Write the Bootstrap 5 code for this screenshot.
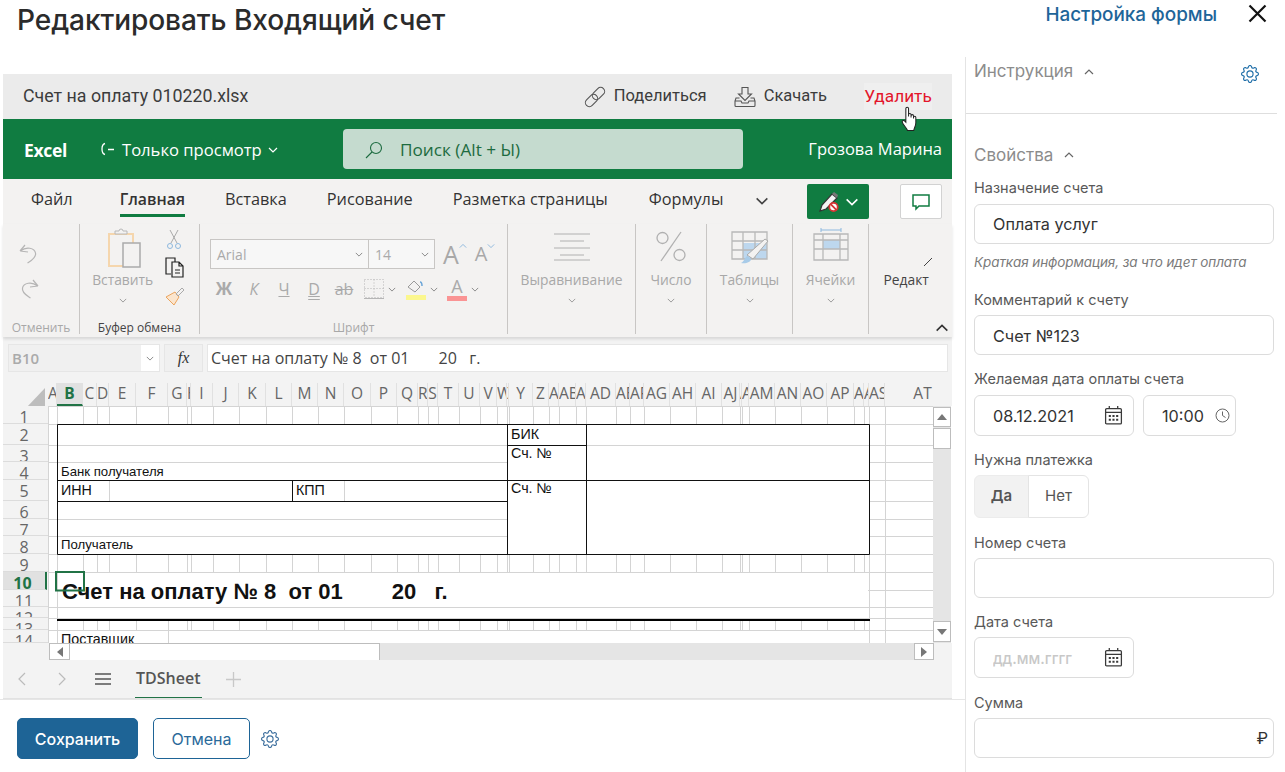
<!DOCTYPE html>
<html lang="ru">
<head>
<meta charset="utf-8">
<title>Редактировать Входящий счет</title>
<link rel="stylesheet" href="https://cdn.jsdelivr.net/npm/bootstrap@5.3.0/dist/css/bootstrap.min.css">
<style>
html,body{height:772px;overflow:hidden;background:#fff}
body{font-family:Inter,"Liberation Sans",sans-serif;color:#333}
.pg-head{height:57px;padding:0 18px 0 17px}
.pg-title{font-size:28.1px;font-weight:500;line-height:40px;margin:0;color:#2b2b2b;letter-spacing:-.1px}
.pg-link{font-size:18.9px;font-weight:500;color:#1e6599;text-decoration:none;line-height:30px}
.pg-x{width:19px;height:19px;margin-left:31px}
.pg-left{width:965px;padding:17px 13px 0 3px}
.pg-right{width:312px;height:715px;border-left:1px solid #e4e4e4;overflow:hidden}
.sec-a{height:57px;border-bottom:1px solid #dedede;padding:4px 18px 0 8px}
.sec-t{font-size:17px;line-height:20px;color:#8c8c8c}
.sec-c{width:10px;height:6px;color:#666;margin-left:11px}
.sec-g{width:18px;height:18px;color:#1f6ea8;margin-top:4px}
.props{padding:31px 3px 0 8px}
.props-h{padding-bottom:9px;margin-bottom:4px}
.fld{margin-bottom:14.5px}
.fld-n{margin-bottom:13.5px}
.fld-c{margin-bottom:13.5px}
.fld-l{display:block;font-size:14.5px;line-height:20px;color:#595959;margin:0 0 5.5px}
.fld-d .fld-l{margin-bottom:6px}
.fld-d{margin-bottom:14px}
.fld-i.form-control{height:40px;border:1px solid #dcdcdc;border-radius:6px;font-size:16.2px;padding:1px 18px 0;color:#333;box-shadow:none}
.fld-i::placeholder{color:#c8c8c8;font-size:15px;font-weight:500}
.fld-h{font-size:13.5px;font-style:italic;line-height:20px;color:#7a7a7a;margin-top:8px;margin-bottom:18px;letter-spacing:-.1px}
.w-date{width:160px}.w-time{width:93px;margin-left:9px}
.w-time .fld-i.form-control{padding-right:0}
.w-date .form-control{height:41px}.w-time .form-control{height:41px}
.fld-ic{position:absolute;right:11px;top:10px;width:19px;height:20px;color:#3a3a3a}
.w-time .fld-ic{width:15px;height:15px;top:13px;color:#666;right:6px}
.rub{position:absolute;right:6px;top:8px;font-size:16.5px;font-weight:400;color:#333;line-height:24px}
.tg .btn{height:43px;font-size:15px;color:#555;border-color:#e4e4e4;padding:0;--bs-btn-hover-bg:transparent;border-radius:6px}
.tg .tg-on{width:55px;background:#f2f2f2;font-weight:600;border-color:#ececec}
.tg .tg-off{width:61px;background:#fff}
.foot{padding-top:18px;padding-left:17px;gap:15px;border-top:1px solid #e6e6e6;margin-left:-3px;margin-right:-13px;width:965px}
.btn.b-save,.btn.b-cancel{height:41px;font-size:16px;font-weight:500;border-radius:5px;padding:0}
.btn.b-save{width:121px;background:#1e6496;border-color:#1e6496;color:#fff}
.btn.b-cancel{width:97px;border:1px solid #1e6496;color:#2a6a9a;background:#fff;font-weight:400}
.foot-g{width:18px;height:18px;color:#3d6f9e;margin-left:-4px}

.xl{width:949px;font-family:"Open Sans","Noto Sans",sans-serif;color:#444}
.xl-file{height:45px;background:#ebebeb;padding-left:20px;font-family:Roboto,"Liberation Sans",sans-serif;font-size:16.5px;color:#3c3c3c}
.xl-file-n{font-size:17.8px}
.xl-act{height:27px;display:flex;align-items:center}
.xl-share{margin-right:27px}
.xl-del{color:#e3152b;background:#efefef;font-size:17.3px;width:68px;height:27px;margin:0 20px 0 37px;justify-content:center;position:relative}
.xl-hand{position:absolute;left:37px;top:23px;width:18px;height:26px}
.xl-green{height:60px;background:#107c41;color:#fff;font-size:16.6px;padding-left:21px}
.xl-brand{font-weight:700;font-size:17.5px;width:74px;letter-spacing:-.3px;padding-top:2px}
.xl-spin{width:24px;height:14px;display:block;flex:none}
.xl-mode{width:221px;padding-top:2px}
.xl-mode-c{margin-left:6px}
.xl-search{width:400px;height:40px;background:#c5dbcf;border-radius:4px;color:#1d6b40;padding-left:21px;padding-top:2px;font-size:17.2px}
.xl-user{margin-left:auto;margin-right:10px;font-size:16.5px;padding-top:1px}
.xl-tabs{height:45px;background:#f3f2f1;font-size:16.3px;color:#333;padding-left:28px;position:relative}
.xl-tab{margin-right:40px;height:45px;line-height:41px;position:relative}
.xl-tab-first{margin-right:47px}
.xl-tab-wide{margin-right:41px}
.xl-tab-last{margin-right:32px}
.xl-tab-on{font-weight:600;font-size:15.8px}
.xl-tab-on::after{content:"";position:absolute;left:0;right:0;bottom:7px;height:3px;background:#107c41}
.xl-more{margin-top:18px;color:#444}
.xl-pill{width:62px;height:35px;background:#107c41;border-radius:2px;margin:5px 31px 0 auto;justify-content:center;gap:5px}
.xl-cm{width:42px;height:35px;background:#fff;border:1px solid #d2d2d2;border-radius:2px;justify-content:center;margin:5px 10px 0 0}
.xl-rib{height:113px;background:#f3f2f1;box-shadow:0 2px 3px rgba(0,0,0,.12);position:relative;z-index:2;padding-bottom:3px;font-size:13.8px;color:#a8a8a8}
.xl-grp{height:110px;border-right:1px solid #c8c6c4;position:relative;display:flex;flex-direction:column;align-items:center}
.xl-grp-b{flex:1 1 auto;width:100%}
.xl-grp-f{font-size:12px;line-height:16px;height:16px;white-space:nowrap;margin-top:auto;flex:none;position:relative;top:2px}
.xl-dark{color:#444}
.g1{width:77px}.g2{width:120px}.g3{width:308px}.g4{width:128px}.g5{width:71px}.g6{width:86px}.g7{width:76px}.g8{width:83px;border-right:0}
.big{display:flex;flex-direction:column;align-items:center;width:100%;padding-top:7px}
.big-ic{height:41px;display:block}
.big-l{line-height:20px;margin-top:-2px;white-space:nowrap;position:relative}
.big-c{width:8px;height:5px;margin-top:8px;color:#999;display:block}
.undo{width:22px;height:22px;color:#b5b5b5;display:block;margin-left:15px}
.undo-1{margin-top:18px}.undo-2{margin-top:13px}
.mini{width:100%;display:flex;flex-direction:column}
.big-clip{width:86px;padding-top:4px}
.big-clip .big-ic{margin-left:4px}
.big-clip .big-l{margin-top:1px}
.mini-clip{width:34px;padding-top:5px}
.mini-2{margin-top:6px}.mini-3{margin-top:7px}
.fnt1{margin:15px 0 0 10px;display:flex;align-items:center}
.fnt-box{height:30px;background:#f7f7f7;border:1px solid #c8c6c4;display:flex;align-items:center;padding:0 5px 0 6px;justify-content:space-between;color:#aaa;font-size:14px}
.fnt-a{width:159px}.fnt-b{width:66px;border-left:0}
.chv{width:8px;height:5px;color:#888;display:block;flex:none}
.fnt2{margin:8px 0 0 10px;display:flex;align-items:center;height:24px;color:#aaa}
.fa-up{font-size:25px;line-height:30px;margin-left:8px}
.fa-dn{font-size:20px;line-height:30px;margin-left:8px}
.fk{width:30px;text-align:center;font-size:16px;line-height:22px;margin-left:-1px;margin-right:1px}
.fk-b{font-weight:700;font-size:18px;font-family:"Liberation Sans",sans-serif}
.fk-i{font-style:italic}
.fk-u{text-decoration:underline}
.fk-d{text-decoration:underline double}
.fk-s{text-decoration:line-through}
.fc-a{width:20px;font-size:18px;line-height:16px}
.fc-bar{height:5px;background:#fa9494;margin-top:2px}
.chv-1{margin-right:10px}.chv-2{margin-right:9px}
.big-cells{padding-top:3px}
.big-cells .big-ic{height:45px}
.big-edit{padding-top:34px}
.big-edit-s{display:block;margin-left:34px}
.big-edit .big-l{margin-top:4px;margin-left:-6px;overflow:hidden;width:48px}
.rib-col{right:3px;bottom:2px}
.xl-fbar{height:46px;background:#f3f3f3;padding:7px 4px 0 5px;gap:4px}
.xl-name{width:152px;height:28px;background:#f0f0f0;border:1px solid #e6e6e6;font-weight:600;color:#aaa;font-size:15px;padding-left:3px;position:relative}
.xl-name-c{position:absolute;right:0;top:0;bottom:0;width:18px;background:#fff;display:flex;align-items:center;justify-content:center}
.xl-fx{width:39px;height:28px;background:#f0f0f0;border:1px solid #e6e6e6;font:italic 16px "Liberation Serif",serif;justify-content:center;color:#333}
.xl-ftxt{flex:1 1 auto;height:28px;background:#fff;border:1px solid #e6e6e6;font-size:16px;padding-left:3px;white-space:pre;color:#444}
.xl-colh{height:23px;background:#f3f3f3;overflow:hidden}
.xl-corner{width:45px;height:23px;flex:none}
.xl-cols{display:grid;grid-template-columns:9px 26px 14px 12px 27px 32px 19px 4px 22px 26px 27px 26px 26px 26px 27px 26px 21px 10px 10px 21px 21px 17px 10px 2px 24px 16px 10px 17px 10px 30px 14px 14px 26px 26px 26px 18px 2px 7px 26px 26px 26px 27px 10px 5px 16px 76px;flex:none}
.xl-cols span{display:flex;justify-content:safe center;overflow:hidden;border-right:1px solid #e1e1e1;font-size:15.5px;line-height:21px;color:#666;height:23px;white-space:nowrap}
.xl-cols .on{background:#e1e1e1;color:#217346;font-weight:700;border-bottom:2px solid #217346}
.xl-sheet{height:237px;background:#fff}
.xl-rows{width:45px;height:237px;background:#f3f3f3;display:grid;grid-template-rows:18px 21px 17px 18px 21px 18px 17px 18px 18px 18px 17px 11px 12px 13px;flex:none}
.xl-rows span{display:block;text-align:center;overflow:hidden;font-size:16px;line-height:22px;color:#666;border-bottom:1px solid #dcdcdc;padding-right:3px}
.xl-rows .on{background:#e1e1e1;color:#217346;font-weight:700;border-right:2px solid #217346;margin-right:1px}
.xl-canvas{display:block;flex:none;font-family:"Liberation Sans",sans-serif}
.xl-vs{width:18px;height:237px;background:#e5e5e5;flex:none;display:flex;flex-direction:column;padding-top:1px}
.sc-b{background:#fff;border:1px solid #bdbdbd;display:flex;align-items:center;justify-content:center;flex:none}
.sc-up{height:20px}.sc-th{height:21px;margin-top:1px}.sc-dn{height:21px;margin-top:auto;margin-bottom:1px}
.xl-hs{height:17px;background:#f3f3f3}
.hs-pad{width:46px;flex:none}.hs-end{width:18px;flex:none}
.hs-l{width:21px;height:17px}.hs-r{width:20px;height:17px}
.hs-th{width:310px;height:17px;border-left:0;border-bottom:0}
.xl-ht{flex:1 1 auto;background:#e5e5e5;height:17px;display:flex}
.xl-sheets{height:39px;background:#f3f3f3;border-bottom:1px solid #e2e2e2;color:#777;padding-left:14px}
.xl-stab{font-size:16px;font-weight:600;color:#555;line-height:37px;height:38px;border-bottom:1px solid #217346;margin:0 0 0 24px;padding:0 1px}
.sh-n{margin-left:30px}.sh-m{margin-left:28px}.sh-p{margin-left:24px}
</style>
</head>
<body>
<svg width="0" height="0" class="position-absolute">
<symbol id="gear" viewBox="0 0 16 16"><path fill="currentColor" d="M8 4.754a3.246 3.246 0 1 0 0 6.492 3.246 3.246 0 0 0 0-6.492zM5.754 8a2.246 2.246 0 1 1 4.492 0 2.246 2.246 0 0 1-4.492 0z"/><path fill="currentColor" d="M9.796 1.343c-.527-1.79-3.065-1.79-3.592 0l-.094.319a.873.873 0 0 1-1.255.52l-.292-.16c-1.64-.892-3.433.902-2.54 2.541l.159.292a.873.873 0 0 1-.52 1.255l-.319.094c-1.79.527-1.79 3.065 0 3.592l.319.094a.873.873 0 0 1 .52 1.255l-.16.292c-.892 1.64.901 3.434 2.541 2.54l.292-.159a.873.873 0 0 1 1.255.52l.094.319c.527 1.79 3.065 1.79 3.592 0l.094-.319a.873.873 0 0 1 1.255-.52l.292.16c1.64.893 3.434-.902 2.54-2.541l-.159-.292a.873.873 0 0 1 .52-1.255l.319-.094c1.79-.527 1.79-3.065 0-3.592l-.319-.094a.873.873 0 0 1-.52-1.255l.16-.292c.893-1.64-.902-3.433-2.541-2.54l-.292.159a.873.873 0 0 1-1.255-.52l-.094-.319zm-2.633.283c.246-.835 1.428-.835 1.674 0l.094.319a1.873 1.873 0 0 0 2.693 1.115l.291-.16c.764-.415 1.6.42 1.184 1.185l-.159.292a1.873 1.873 0 0 0 1.116 2.692l.318.094c.835.246.835 1.428 0 1.674l-.319.094a1.873 1.873 0 0 0-1.115 2.693l.16.291c.415.764-.42 1.6-1.185 1.184l-.291-.159a1.873 1.873 0 0 0-2.693 1.116l-.094.318c-.246.835-1.428.835-1.674 0l-.094-.319a1.873 1.873 0 0 0-2.692-1.115l-.292.16c-.764.415-1.6-.42-1.184-1.185l.159-.291A1.873 1.873 0 0 0 1.945 8.93l-.319-.094c-.835-.246-.835-1.428 0-1.674l.319-.094A1.873 1.873 0 0 0 3.06 4.377l-.16-.292c-.415-.764.42-1.6 1.185-1.184l.292.159a1.873 1.873 0 0 0 2.692-1.115l.094-.319z"/></symbol>
<symbol id="dn" viewBox="0 0 10 6"><path d="M1 1l4 4 4-4" fill="none" stroke="currentColor" stroke-width="1.2"/></symbol>
<symbol id="up" viewBox="0 0 10 6"><path d="M1 5l4-4 4 4" fill="none" stroke="currentColor" stroke-width="1.2"/></symbol>
<symbol id="cal" viewBox="0 0 18 19"><path fill="none" stroke="currentColor" stroke-width="1.2" d="M1.500 4.500a1 1 0 0 1 1-1h13a1 1 0 0 1 1 1v12.500a1 1 0 0 1-1 1h-13a1 1 0 0 1-1-1zM1.500 7h15M5 1v3M13 1v3"/><path fill="currentColor" d="M4.500 9.500h2v2h-2zM8 9.500h2v2H8zM11.500 9.500h2v2h-2zM4.500 13h2v2h-2zM8 13h2v2H8zM11.500 13h2v2h-2z"/></symbol>
</svg>

<header class="pg-head d-flex align-items-start justify-content-between">
  <h1 class="pg-title">Редактировать Входящий счет</h1>
  <div class="d-flex align-items-start">
    <a href="#" class="pg-link">Настройка формы</a>
    <svg class="pg-x mt-1" viewBox="0 0 19 19"><path d="M1.500 1.500l16 16M17.500 1.500l-16 16" stroke="#111" stroke-width="2.200" fill="none"/></svg>
  </div>
</header>

<main class="d-flex">
  <section class="pg-left">
    <div class="xl">
      <div class="xl-file d-flex align-items-center">
        <span class="xl-file-n me-auto">Счет на оплату 010220.xlsx</span>
        <span class="xl-act xl-share"><svg class="me-2" width="22" height="22" viewBox="0 0 22 22" fill="none" stroke="#555" stroke-width="1.100"><rect x="0.500" y="10.500" width="14" height="8" rx="4" transform="rotate(-45 7.500 14.500)"/><rect x="7.500" y="3.500" width="14" height="8" rx="4" transform="rotate(-45 14.500 7.500)"/></svg>Поделиться</span>
        <span class="xl-act"><svg class="me-2" width="22" height="22" viewBox="0 0 22 22" fill="none" stroke="#555" stroke-width="1.100"><path d="M8 1.500h6V8h3.500L11 14.500 4.500 8H8z"/><path d="M5.500 12H2l-1 3v4.500a1 1 0 0 0 1 1h18a1 1 0 0 0 1-1V15l-1-3h-3.500M1 15h6l1 2h6l1-2h6"/></svg>Скачать</span>
        <span class="xl-act xl-del">Удалить
          <svg class="xl-hand" viewBox="0 0 17 25"><path fill="#fff" stroke="#222" stroke-width="1" d="M4.500 2.500a1.300 1.300 0 0 1 2.600 0V10V8.500a1.200 1.200 0 0 1 2.400 0V11V9.500a1.200 1.200 0 0 1 2.400 0V12v-1a1.100 1.100 0 0 1 2.200 0v5c0 3-1.500 5-2 7.500H6C5.500 21 1 17.500 1 15.200c0-1.500 1.500-1.700 2.500-.7l1 1z"/></svg>
        </span>
      </div>

      <div class="xl-green d-flex align-items-center">
        <span class="xl-brand">Excel</span>
        <svg class="xl-spin" viewBox="0 0 24 14" fill="none" stroke="#fff" stroke-width="1.300"><path d="M7 1.500C3 2.500 3 11.500 7 12.500M10 7.500h6"/></svg>
        <span class="xl-mode d-flex align-items-center">Только просмотр<svg class="xl-mode-c" width="10" height="6"><use href="#dn"/></svg></span>
        <div class="xl-search d-flex align-items-center"><svg class="me-3" width="20" height="20" viewBox="0 0 20 20" fill="none" stroke="#1d6b40" stroke-width="1.100"><circle cx="12" cy="8" r="5.500"/><path d="M8 12l-6 6"/></svg>Поиск (Alt + Ы)</div>
        <span class="xl-user">Грозова Марина</span>
      </div>

      <div class="xl-tabs d-flex align-items-start">
        <span class="xl-tab xl-tab-first">Файл</span>
        <span class="xl-tab xl-tab-on">Главная</span>
        <span class="xl-tab">Вставка</span>
        <span class="xl-tab">Рисование</span>
        <span class="xl-tab xl-tab-wide">Разметка страницы</span>
        <span class="xl-tab xl-tab-last">Формулы</span>
        <svg class="xl-more" width="14" height="8" viewBox="0 0 10 6"><use href="#dn"/></svg>
        <div class="xl-pill d-flex align-items-center">
          <svg width="22" height="22" viewBox="0 0 22 22"><path d="M2 20l2-6L14 3l5 4L8 18z" fill="#f4f4f4" stroke="#333" stroke-width="1.200"/><path d="M14 3l2-2 4 3-1 3z" fill="#777"/><circle cx="15.500" cy="16" r="4.200" fill="#fff" stroke="#d63333" stroke-width="1.800"/><path d="M12.700 13.200l5.600 5.600" stroke="#d63333" stroke-width="1.800"/></svg>
          <svg width="14" height="8" viewBox="0 0 10 6" color="#fff"><use href="#dn"/></svg>
        </div>
        <div class="xl-cm d-flex align-items-center"><svg width="18" height="18" viewBox="0 0 18 18" fill="none" stroke="#107c41" stroke-width="1.500"><path d="M1 2h16v11H7l-3 3v-3H1z"/></svg></div>
      </div>

      <div class="xl-rib d-flex">
        <div class="xl-grp g1">
          <div class="xl-grp-b">
            <svg class="undo undo-1" viewBox="0 0 22 22" fill="none" stroke="currentColor" stroke-width="1.200"><path d="M2 9l5-6M2 9l8 1M2.500 9c6-5 14-3 15 2s-5 8-8 10"/></svg>
            <svg class="undo undo-2" viewBox="0 0 22 22" fill="none" stroke="currentColor" stroke-width="1.200"><path d="M20 9l-5-6M20 9l-8 1M19.500 9c-6-5-14-3-15 2s5 8 8 10"/></svg>
          </div>
          <div class="xl-grp-f">Отменить</div>
        </div>
        <div class="xl-grp g2">
          <div class="xl-grp-b d-flex">
            <div class="big big-clip">
              <svg class="big-ic" width="38" height="41" viewBox="0 0 38 41" fill="none"><path d="M3 6h24v32H3z" stroke="#f5d6ad" stroke-width="2"/><path d="M9 6h12V3H17a2 2 0 0 0-4 0H9z" stroke="#b8b8b8" fill="#f3f2f1"/><rect x="17" y="15" width="17" height="24" fill="#f3f2f1" stroke="#aaa" stroke-width="1.500"/></svg>
              <span class="big-l">Вставить</span><svg class="big-c"><use href="#dn"/></svg>
            </div>
            <div class="mini mini-clip">
              <svg width="18" height="22" viewBox="0 0 18 22" fill="none" stroke="#aaa"><path d="M5 1l7 13M13 1L6 14"/><circle cx="5" cy="17" r="2.500" stroke="#8db8de"/><circle cx="13" cy="17" r="2.500" stroke="#8db8de"/></svg>
              <svg class="mini-2" width="20" height="22" viewBox="0 0 20 22" fill="none" stroke="#222" stroke-width="1.200"><path d="M6 17H1V1h9v4"/><path d="M7 5h7l4 4v11H7zM14 5v4h4M10 13h5M10 16h5" fill="#f3f2f1"/></svg>
              <svg class="mini-3" width="20" height="20" viewBox="0 0 20 20" fill="none"><path d="M10 6L1 11l8 8 5-8z" fill="#fbe5cd" stroke="#eba45d"/><path d="M11 8l6-6 2 2-6 6z" stroke="#aaa"/></svg>
            </div>
          </div>
          <div class="xl-grp-f xl-dark">Буфер обмена</div>
        </div>
        <div class="xl-grp g3 align-items-stretch">
          <div class="xl-grp-b">
            <div class="fnt1">
              <div class="fnt-box fnt-a"><span>Arial</span><svg class="chv"><use href="#dn"/></svg></div>
              <div class="fnt-box fnt-b"><span>14</span><svg class="chv"><use href="#dn"/></svg></div>
              <span class="fa-up">A</span><svg width="8" height="6" class="align-self-start mt-1" color="#8db8de"><use href="#up"/></svg>
              <span class="fa-dn">A</span><svg width="8" height="6" class="align-self-start mt-1" color="#8db8de"><use href="#dn"/></svg>
            </div>
            <div class="fnt2">
              <span class="fk fk-b">Ж</span><span class="fk fk-i">К</span><span class="fk fk-u">Ч</span><span class="fk fk-d">D</span><span class="fk fk-s">ab</span>
              <svg class="ms-1" width="20" height="20" viewBox="0 0 20 20" fill="none" stroke="#b5b5b5" stroke-dasharray="1 2"><path d="M.5.500h19v18H.5zM10 .5v18M.5 9.500h19"/><path d="M0 19.500h20" stroke-dasharray="none"/></svg>
              <svg class="chv ms-1 chv-1"><use href="#dn"/></svg>
              <svg width="20" height="22" viewBox="0 0 20 22" fill="none"><path d="M2 9l6-6 6 6-5 5z" stroke="#999"/><path d="M14 4c2 0 2 2 2 4" stroke="#6aa5d8" stroke-width="1.500"/><path d="M0 17h20v5H0z" fill="#fbf78e"/></svg>
              <svg class="chv ms-1 chv-2"><use href="#dn"/></svg>
              <span class="d-inline-flex flex-column align-items-center fc-a">A<i class="d-block w-100 fc-bar"></i></span>
              <svg class="chv ms-1"><use href="#dn"/></svg>
            </div>
          </div>
          <div class="xl-grp-f text-center">Шрифт</div>
        </div>
        <div class="xl-grp g4"><div class="xl-grp-b big">
          <svg class="big-ic" width="36" height="41" viewBox="0 0 36 41" stroke="#b0b0b0"><path d="M0 3h36M6 10h24M0 17h36M6 24h24M0 29h36"/></svg>
          <span class="big-l">Выравнивание</span><svg class="big-c"><use href="#dn"/></svg></div></div>
        <div class="xl-grp g5"><div class="xl-grp-b big">
          <svg class="big-ic" width="32" height="41" viewBox="0 0 32 41" fill="none" stroke="#b0b0b0" stroke-width="1.300"><circle cx="7.500" cy="7" r="5.500"/><circle cx="24.500" cy="24" r="5.500"/><path d="M26 1L6 30"/></svg>
          <span class="big-l">Число</span><svg class="big-c"><use href="#dn"/></svg></div></div>
        <div class="xl-grp g6"><div class="xl-grp-b big">
          <svg class="big-ic" width="38" height="41" viewBox="0 0 38 41" fill="none"><path d="M12 12h24v16H12z" fill="#bdd7ee"/><path d="M1 1h35v27H1zM12 1v27M24 1v27M1 10h35M1 19h35" stroke="#b8b8b8" stroke-width="1.300"/><path d="M16 24L34 8l3 2-15 18z" fill="#f3f2f1" stroke="#aaa"/><path d="M10 32c5 1 10-1 10-4l-3-3c-3 0-3 5-7 7z" fill="#a8cbe8"/></svg>
          <span class="big-l">Таблицы</span><svg class="big-c"><use href="#dn"/></svg></div></div>
        <div class="xl-grp g7"><div class="xl-grp-b big big-cells">
          <svg class="big-ic" width="36" height="45" viewBox="0 0 36 45" fill="none"><path d="M8 3h20M8 1v4M28 1v4" stroke="#8db8de"/><path d="M10 13h17v9H10z" fill="#bdd7ee"/><path d="M1 7h34v26H1zM10 7v26M27 7v26M1 13h34M1 22h34" stroke="#b8b8b8" stroke-width="1.300"/></svg>
          <span class="big-l">Ячейки</span><svg class="big-c"><use href="#dn"/></svg></div></div>
        <div class="xl-grp g8"><div class="xl-grp-b big big-edit position-relative">
          <svg class="big-edit-s" width="8" height="8" viewBox="0 0 8 8"><path d="M0 8l8-8" stroke="#444"/></svg>
          <span class="big-l xl-dark">Редакт</span></div>
          <svg class="position-absolute rib-col" width="14" height="8" viewBox="0 0 10 6" color="#333"><use href="#up"/></svg>
        </div>
      </div>

      <div class="xl-fbar d-flex">
        <div class="xl-name d-flex align-items-center">B10<span class="xl-name-c"><svg class="chv"><use href="#dn"/></svg></span></div>
        <div class="xl-fx d-flex align-items-center">fx</div>
        <div class="xl-ftxt d-flex align-items-center">Счет на оплату № 8  от 01       20   г.</div>
      </div>

      <div class="xl-colh d-flex">
        <div class="xl-corner"><svg width="45" height="23" viewBox="0 0 45 23"><path d="M24 22L42 3v19z" fill="#bdbdbd"/></svg></div>
        <div class="xl-cols"><span>A</span><span class="on">B</span><span>C</span><span>D</span><span>E</span><span>F</span><span>G</span><span>H</span><span>I</span><span>J</span><span>K</span><span>L</span><span>M</span><span>N</span><span>O</span><span>P</span><span>Q</span><span>R</span><span>S</span><span>T</span><span>U</span><span>V</span><span>W</span><span>X</span><span>Y</span><span>Z</span><span>AA</span><span>AB</span><span>AC</span><span>AD</span><span>AE</span><span>AF</span><span>AG</span><span>AH</span><span>AI</span><span>AJ</span><span>AK</span><span>AL</span><span>AM</span><span>AN</span><span>AO</span><span>AP</span><span>AQ</span><span>AR</span><span>AS</span><span>AT</span></div>
      </div>

      <div class="xl-sheet d-flex">
        <div class="xl-rows"><span>1</span><span>2</span><span>3</span><span>4</span><span>5</span><span>6</span><span>7</span><span>8</span><span>9</span><span class="on">10</span><span>11</span><span>12</span><span>13</span><span>14</span></div>
        <svg class="xl-canvas" width="885" height="237" viewBox="48 406 885 237">
          <path fill="none" stroke="#d4d4d4" d="M57.500 406V643M83.500 406V643M97.500 406V643M109.500 406V643M136.500 406V643M168.500 406V643M187.500 406V643M191.500 406V643M213.500 406V643M239.500 406V643M266.500 406V643M292.500 406V643M318.500 406V643M344.500 406V643M371.500 406V643M397.500 406V643M418.500 406V643M428.500 406V643M438.500 406V643M459.500 406V643M480.500 406V643M497.500 406V643M507.500 406V643M509.500 406V643M533.500 406V643M549.500 406V643M559.500 406V643M576.500 406V643M586.500 406V643M616.500 406V643M630.500 406V643M644.500 406V643M670.500 406V643M696.500 406V643M722.500 406V643M740.500 406V643M742.500 406V643M749.500 406V643M775.500 406V643M801.500 406V643M827.500 406V643M854.500 406V643M864.500 406V643M869.500 406V643M885.500 406V643"/>
          <path fill="#fff" d="M58 425h811v129H58zM58 573h811v45H58zM58 631h811v12H58z"/>
          <path fill="none" stroke="#d4d4d4" d="M48 406.500H933M48 424.500H933M48 445.500H933M48 462.500H507M869 462.500H933M869 480.500H933M869 501.500H933M48 519.500H507M869 519.500H933M48 536.500H507M869 536.500H933M48 554.500H933M48 572.500H933M868 590.500H933M48 607.500H933M48 618.500H933M48 630.500H933M109.500 480V501M344.500 480V501M168.500 631V643M48.500 406V643"/>
          <path fill="none" stroke="#111" d="M57.500 424.500H869.500V554.500H57.500ZM507.500 424V554M586.500 424V554M57 480.500H869M57 501.500H507M507 445.500H586M292.500 480V501"/>
          <path d="M57 620H870" stroke="#000" stroke-width="2"/>
          <g fill="#111" font-size="13.200">
            <text x="61" y="476">Банк получателя</text>
            <text x="61" y="549">Получатель</text>
            <g font-size="14.300">
              <text x="61" y="495">ИНН</text>
              <text x="296" y="495">КПП</text>
              <text x="511" y="439">БИК</text>
              <text x="511" y="458">Сч. №</text>
              <text x="511" y="493">Сч. №</text>
              <text x="61" y="644">Поставщик</text>
            </g>
            <text x="62" y="599" font-size="22" font-weight="700" xml:space="preserve" style="white-space:pre">Счет на оплату № 8  от 01        20   г.</text>
          </g>
          <rect x="56" y="572" width="28" height="18.500" fill="none" stroke="#217346" stroke-width="2"/>
        </svg>
        <div class="xl-vs">
          <div class="sc-b sc-up"><svg width="10" height="6" viewBox="0 0 10 6"><path d="M5 0l5 6H0z" fill="#777"/></svg></div>
          <div class="sc-b sc-th"></div>
          <div class="sc-b sc-dn"><svg width="10" height="6" viewBox="0 0 10 6"><path d="M5 6l5-6H0z" fill="#777"/></svg></div>
        </div>
      </div>

      <div class="xl-hs d-flex">
        <div class="hs-pad"></div>
        <div class="sc-b hs-l"><svg width="6" height="10" viewBox="0 0 6 10"><path d="M0 5l6 5V0z" fill="#777"/></svg></div>
        <div class="sc-b hs-th"></div>
        <div class="xl-ht"></div>
        <div class="sc-b hs-r"><svg width="6" height="10" viewBox="0 0 6 10"><path d="M6 5L0 10V0z" fill="#777"/></svg></div>
        <div class="hs-end"></div>
      </div>

      <div class="xl-sheets d-flex align-items-center">
        <svg width="10" height="14" viewBox="0 0 10 14" fill="none" stroke="#bbb" stroke-width="1.200"><path d="M8 1L2 7l6 6"/></svg>
        <svg class="sh-n" width="10" height="14" viewBox="0 0 10 14" fill="none" stroke="#bbb" stroke-width="1.200"><path d="M2 1l6 6-6 6"/></svg>
        <svg class="sh-m" width="16" height="12" viewBox="0 0 16 12" stroke="#555" stroke-width="1.300"><path d="M0 1h16M0 6h16M0 11h16"/></svg>
        <span class="xl-stab">TDSheet</span>
        <svg class="sh-p" width="15" height="15" viewBox="0 0 15 15" stroke="#c8c8c8" stroke-width="1.300"><path d="M7.500 0v15M0 7.500h15"/></svg>
      </div>
    </div>

    <div class="foot d-flex align-items-center">
      <button class="btn b-save">Сохранить</button>
      <button class="btn b-cancel">Отмена</button>
      <svg class="foot-g"><use href="#gear"/></svg>
    </div>
  </section>

  <aside class="pg-right">
    <div class="sec-a d-flex align-items-start">
      <span class="sec-t">Инструкция</span>
      <svg class="sec-c mt-2"><use href="#up"/></svg>
      <svg class="sec-g ms-auto"><use href="#gear"/></svg>
    </div>
    <form class="props">
      <div class="d-flex align-items-center props-h"><span class="sec-t">Свойства</span><svg class="sec-c"><use href="#up"/></svg></div>
      <div class="fld mb-0">
        <label class="fld-l">Назначение счета</label>
        <input class="form-control fld-i" value="Оплата услуг">
        <div class="fld-h">Краткая информация, за что идет оплата</div>
      </div>
      <div class="fld fld-c">
        <label class="fld-l">Комментарий к счету</label>
        <input class="form-control fld-i" value="Счет №123">
      </div>
      <div class="fld fld-d">
        <label class="fld-l">Желаемая дата оплаты счета</label>
        <div class="d-flex">
          <div class="position-relative w-date"><input class="form-control fld-i" value="08.12.2021"><svg class="fld-ic"><use href="#cal"/></svg></div>
          <div class="position-relative w-time"><input class="form-control fld-i" value="10:00"><svg class="fld-ic" viewBox="0 0 15 15" fill="none" stroke="currentColor"><circle cx="7.500" cy="7.500" r="6.500"/><path d="M7.500 3.500v4l3 2"/></svg></div>
        </div>
      </div>
      <div class="fld">
        <label class="fld-l">Нужна платежка</label>
        <div class="btn-group tg"><button type="button" class="btn tg-on">Да</button><button type="button" class="btn tg-off">Нет</button></div>
      </div>
      <div class="fld fld-n">
        <label class="fld-l">Номер счета</label>
        <input class="form-control fld-i">
      </div>
      <div class="fld">
        <label class="fld-l">Дата счета</label>
        <div class="position-relative w-date"><input class="form-control fld-i" placeholder="дд.мм.гггг"><svg class="fld-ic"><use href="#cal"/></svg></div>
      </div>
      <div class="fld">
        <label class="fld-l">Сумма</label>
        <div class="position-relative"><input class="form-control fld-i"><span class="rub">₽</span></div>
      </div>
    </form>
  </aside>
</main>
<script src="https://cdn.jsdelivr.net/npm/bootstrap@5.3.0/dist/js/bootstrap.bundle.min.js"></script>
</body>
</html>
